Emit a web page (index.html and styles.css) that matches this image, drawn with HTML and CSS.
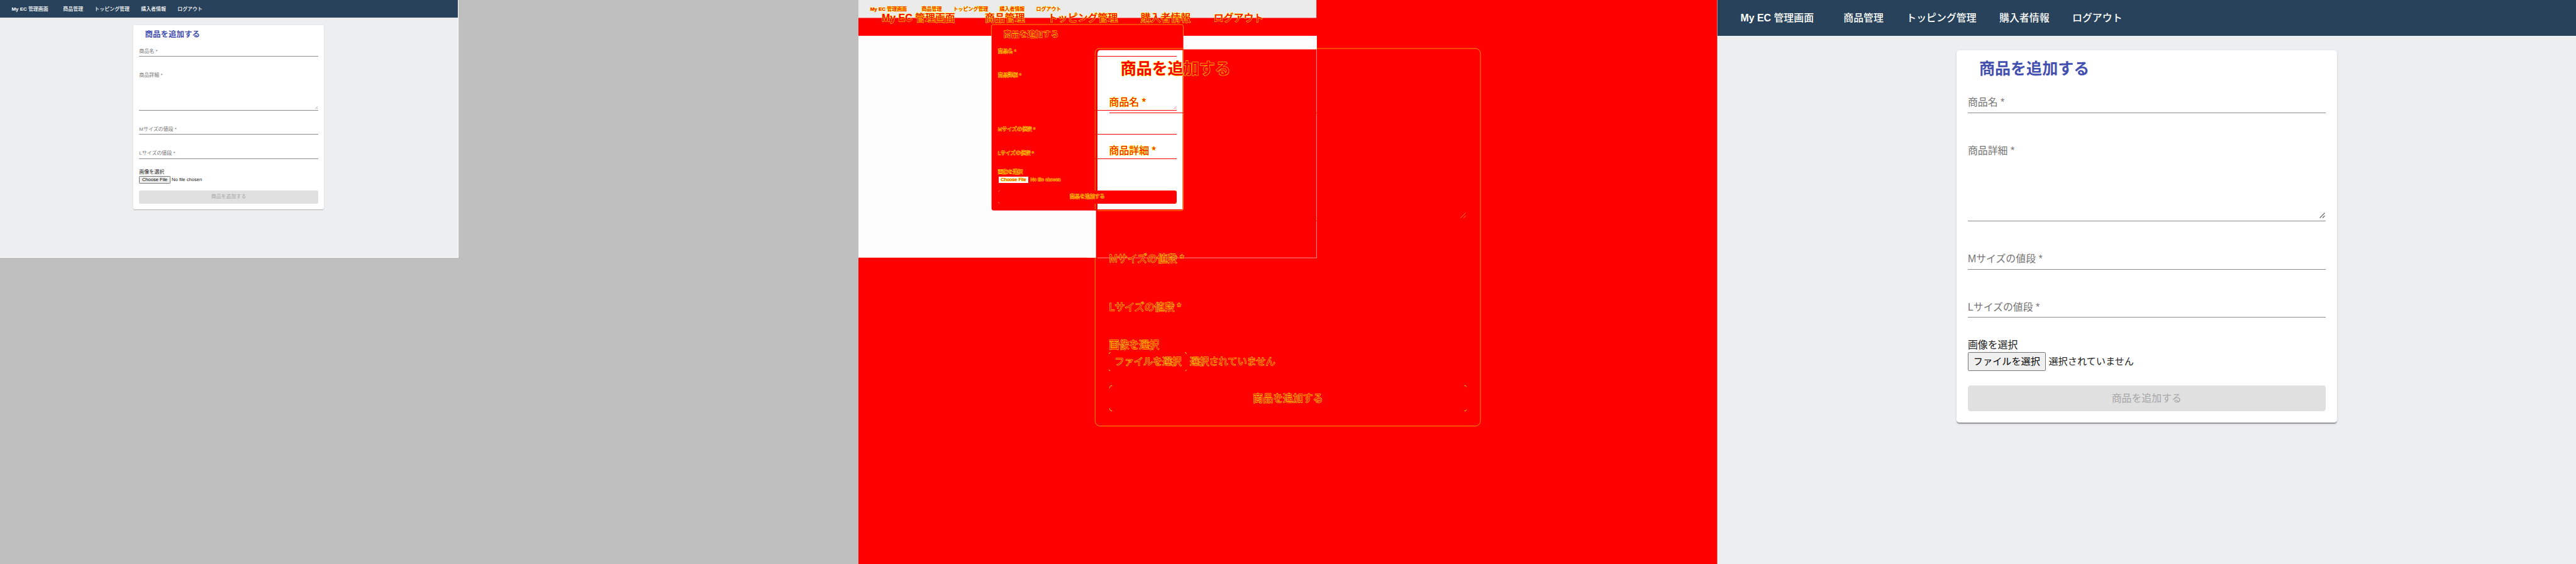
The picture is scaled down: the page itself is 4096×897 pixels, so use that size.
FILE: index.html
```html
<!DOCTYPE html>
<html lang="ja">
<head>
<meta charset="utf-8">
<title>My EC 管理画面</title>
<link rel="stylesheet" href="styles.css">
</head>
<body>
<main class="panels">
  <section class="panel panel-before">
    <div class="page page-small">
      <nav class="nav"><span class="brand"><span class="latin">My EC</span> 管理画面</span><span>商品管理</span><span>トッピング管理</span><span>購入者情報</span><span>ログアウト</span></nav>
      <div class="card">
        <h2 class="title">商品を追加する</h2>
        <div class="field">商品名 *</div>
        <div class="field field-area">商品詳細 *<svg class="grip" viewBox="0 0 8 8"><path d="M.5 7.5l7-7M4.5 7.5l3-3"/></svg></div>
        <div class="field">Mサイズの値段 *</div>
        <div class="field">Lサイズの値段 *</div>
        <div class="upload-label">画像を選択</div>
        <div class="upload"><span class="file-btn">Choose File</span><span class="file-name">No file chosen</span></div>
        <div class="submit">商品を追加する</div>
      </div>
    </div>
  </section>

  <section class="panel panel-diff">
    <svg class="regions" viewBox="0 0 2400 1576" preserveAspectRatio="none">
      <rect width="2400" height="1576" fill="#f00"/>
      <rect width="1280" height="50" fill="#ebebeb"/>
      <rect y="100" width="1281" height="620" fill="#fdfdfd"/>
      <rect x="661.500" y="135.500" width="1077" height="1055" rx="14" fill="#f00" stroke="#ff0" stroke-width="1"/>
      <path d="M908 100h373v38h-373zM640 588h24v132h-24z" fill="#fdfdfd"/>
      <path d="M1280.5 138v582.500H668" fill="none" stroke="#fff" stroke-width="1"/>
      <rect x="372" y="68" width="536" height="520" rx="6" fill="#f00"/>
      <path d="M371.500 100V74q0-5.500 6-5.500h524.500q6 0 6 5.500v26M908 138v444q0 6.500-6 6.500H669M661.500 585V149q0-13.500 14-13.500h232" fill="none" stroke="#ff0" stroke-width="1"/>
      <path d="M668 585V152q0-12 8-12h230v445z" fill="#fff"/>
    </svg>
    <div class="page page-small ghost">
      <nav class="nav"><span class="brand"><span class="latin">My EC</span> 管理画面</span><span>商品管理</span><span>トッピング管理</span><span>購入者情報</span><span>ログアウト</span></nav>
      <div class="card">
        <h2 class="title">商品を追加する</h2>
        <div class="field">商品名 *</div>
        <div class="field field-area">商品詳細 *<svg class="grip" viewBox="0 0 8 8"><path d="M.5 7.5l7-7M4.5 7.5l3-3"/></svg></div>
        <div class="field">Mサイズの値段 *</div>
        <div class="field">Lサイズの値段 *</div>
        <div class="upload-label">画像を選択</div>
        <div class="upload"><span class="file-btn">Choose File</span><span class="file-name">No file chosen</span></div>
        <div class="submit">商品を追加する<svg class="corners" viewBox="0 0 500 36"><path d="M.5 4q0-3.500 4-3.500M495.500.5q4 0 4 3.500M.5 32q0 3.500 4 3.500M495.500 35.500q4 0 4-3.500"/></svg></div>
      </div>
    </div>
    <div class="page page-large ghost">
      <nav class="nav"><span class="brand"><span class="latin">My EC</span> 管理画面</span><span>商品管理</span><span>トッピング管理</span><span>購入者情報</span><span>ログアウト</span></nav>
      <div class="card">
        <h2 class="title">商品を追加する</h2>
        <div class="field">商品名 *</div>
        <div class="field field-area">商品詳細 *<svg class="grip" viewBox="0 0 8 8"><path d="M.5 7.5l7-7M4.5 7.5l3-3"/></svg></div>
        <div class="field">Mサイズの値段 *</div>
        <div class="field">Lサイズの値段 *</div>
        <div class="upload-label">画像を選択</div>
        <div class="upload"><span class="file-btn">ファイルを選択<svg class="corners" viewBox="0 0 109 27"><path d="M.4 2.500q0-2 2-2M106.500.5q2 0 2 2M.4 24.500q0 2 2 2M106.500 26.500q2 0 2-2"/></svg></span><span class="file-name">選択されていません</span></div>
        <div class="submit">商品を追加する<svg class="corners" viewBox="0 0 500 36"><path d="M.3 4q0-3.700 3.500-3.700M496.200.3q3.500 0 3.500 3.700M.3 32q0 3.700 3.500 3.700M496.200 35.700q3.500 0 3.500-3.700"/></svg></div>
      </div>
    </div>
  </section>

  <section class="panel panel-after">
    <div class="page page-large">
      <nav class="nav"><span class="brand"><span class="latin">My EC</span> 管理画面</span><span>商品管理</span><span>トッピング管理</span><span>購入者情報</span><span>ログアウト</span></nav>
      <div class="card">
        <h2 class="title">商品を追加する</h2>
        <div class="field">商品名 *</div>
        <div class="field field-area">商品詳細 *<svg class="grip" viewBox="0 0 8 8"><path d="M.5 7.5l7-7M4.5 7.5l3-3"/></svg></div>
        <div class="field">Mサイズの値段 *</div>
        <div class="field">Lサイズの値段 *</div>
        <div class="upload-label">画像を選択</div>
        <div class="upload"><span class="file-btn">ファイルを選択</span><span class="file-name">選択されていません</span></div>
        <div class="submit">商品を追加する</div>
      </div>
    </div>
  </section>
</main>
</body>
</html>
```
FILE: styles.css
```css
* { box-sizing: border-box; }

body {
  margin: 0;
  overflow: hidden;
  font-family: "Liberation Sans", "Noto Sans CJK JP", sans-serif;
}

.panels {
  display: grid;
  grid-template-columns: repeat(3, 1fr);
  width: 4096px;
  height: 897px;
}

.panel {
  position: relative;
  overflow: hidden;
  background: #bfbfbf;
}

/* --u is one layout pixel of the captured page */
.page {
  display: flex;
  flex-direction: column;
  align-items: center;
  background: #edeef0;
  color: #212121;
  font-size: calc(14 * var(--u));
  white-space: nowrap;
}

.page-small {
  --u: 0.56889px;
  --file-h: 21;
  --file-w: 87;
  --outline: 0.8px;
  width: calc(1281 * var(--u));
  height: calc(721 * var(--u));
  padding-right: var(--u);
  border-right: 0.6px solid #fff;
  border-bottom: 0.6px solid #fff;
}

.page-large {
  --u: 1.13778px;
  --file-h: 27;
  --file-w: 109;
  --outline: 1px;
  width: calc(1200 * var(--u));
  height: calc(788.5 * var(--u));
}

.nav {
  display: flex;
  align-items: center;
  align-self: stretch;
  gap: calc(32 * var(--u));
  height: calc(50 * var(--u));
  margin-right: calc(-1 * var(--u));
  padding-top: calc(1.4 * var(--u));
  padding-left: calc(32.3 * var(--u));
  background: #27425a;
  color: #fff;
  font-weight: 500;
  line-height: 1;
}

.brand { width: calc(112 * var(--u)); }
.latin { font-weight: 700; }

.card {
  flex: none;
  display: flex;
  flex-direction: column;
  width: calc(532 * var(--u));
  margin-top: calc(20 * var(--u));
  padding: calc(10 * var(--u)) calc(16 * var(--u)) calc(16 * var(--u));
  border-radius: calc(4 * var(--u));
  background: #fff;
  box-shadow: 0 calc(2 * var(--u)) calc(1 * var(--u)) calc(-1 * var(--u)) rgba(0, 0, 0, 0.2),
    0 calc(1 * var(--u)) calc(1 * var(--u)) rgba(0, 0, 0, 0.14),
    0 calc(1 * var(--u)) calc(3 * var(--u)) rgba(0, 0, 0, 0.12);
}

.title {
  height: calc(32 * var(--u));
  margin: 0 0 0 calc(16 * var(--u));
  color: #4350af;
  font-size: calc(22 * var(--u));
  font-weight: 700;
  line-height: calc(32 * var(--u));
}

.field {
  position: relative;
  height: calc(25 * var(--u));
  margin-top: calc(42 * var(--u));
  border-bottom: calc(1 * var(--u)) solid #8c8c8c;
  color: #757575;
  line-height: calc(21 * var(--u));
}

.title + .field { margin-top: calc(21 * var(--u)); }
.field-area { height: calc(109 * var(--u)); }
.field-area + .field { margin-top: calc(43 * var(--u)); }

.grip {
  position: absolute;
  right: calc(1 * var(--u));
  bottom: calc(3 * var(--u));
  width: calc(8 * var(--u));
  height: calc(8 * var(--u));
  fill: none;
  stroke: #444;
  stroke-width: 0.9;
}

.upload-label {
  height: calc(20 * var(--u));
  margin-top: calc(28 * var(--u));
  line-height: calc(20.6 * var(--u));
}

.upload {
  display: flex;
  align-items: center;
  gap: calc(4 * var(--u));
  height: calc(var(--file-h) * var(--u));
  font-size: calc(13.333 * var(--u));
}

.file-btn {
  position: relative;
  display: grid;
  place-items: center;
  width: calc(var(--file-w) * var(--u));
  height: calc(var(--file-h) * var(--u));
  border: calc(1 * var(--u)) solid #767676;
  border-radius: calc(2 * var(--u));
  background: #efefef;
  color: #000;
  line-height: 1;
}

.file-name { line-height: 1; }

.submit {
  position: relative;
  display: grid;
  place-items: center;
  height: calc(36 * var(--u));
  margin-top: calc(20 * var(--u));
  border-radius: calc(4 * var(--u));
  background: #e0e0e0;
  color: #a6a6a6;
  line-height: 1;
}

/* comparison layer: changed pixels red, antialiased edges yellow */
.regions {
  display: block;
  width: 100%;
  height: 100%;
}

.ghost {
  position: absolute;
  top: 0;
  left: 0;
  border-color: transparent;
  background: none;
  -webkit-text-stroke: var(--outline) #ff0;
  paint-order: stroke fill;
}

.ghost .nav,
.ghost .card {
  background: none;
  box-shadow: none;
}

.ghost,
.ghost .nav,
.ghost .title,
.ghost .field,
.ghost .file-btn,
.ghost .submit { color: #f00; }

.ghost .field { border-color: #f00; }
.ghost .file-btn { border-color: transparent; background: none; }
.ghost .submit { background: none; }
.ghost.page-small .submit { background: #f00; }
.ghost.page-small .file-btn { border-color: #f00; background: #fff; }
.ghost .grip { stroke: #f00; }
.ghost.page-large .grip { stroke: #ff0; stroke-width: 0.5; }

.corners {
  position: absolute;
  top: 0;
  left: 0;
  width: 100%;
  height: 100%;
  fill: none;
  stroke: #ff0;
  stroke-width: 0.8;
}

.file-btn .corners {
  top: calc(-1 * var(--u));
  left: calc(-1 * var(--u));
  width: calc(109 * var(--u));
  height: calc(27 * var(--u));
}
```
